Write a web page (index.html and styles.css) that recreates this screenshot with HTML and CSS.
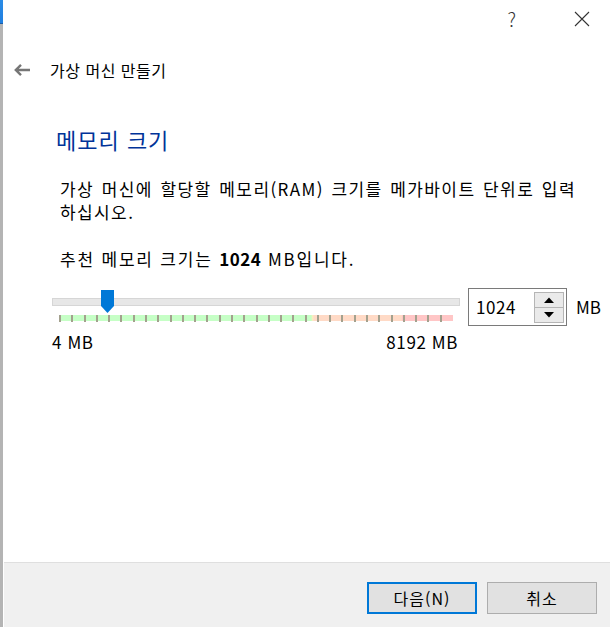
FILE: index.html
```html
<!DOCTYPE html>
<html lang="ko">
<head>
    <meta charset="UTF-8">
    <meta name="viewport" content="width=device-width, initial-scale=1.0">
    <title>가상 머신 만들기</title>
    <link rel="stylesheet" href="styles.css">
</head>
<body>
    <div class="edge"></div>
    <div class="window">
        <div class="titlebar">
            <span class="help">?</span>
            <svg class="close" width="16" height="16" viewBox="0 0 16 16">
                <path d="M1 1 L15 15 M15 1 L1 15" stroke="#333" stroke-width="1.1" fill="none"/>
            </svg>
        </div>
        <div class="header">
            <svg class="back" width="18" height="14" viewBox="0 0 18 14">
                <path d="M17 7 H3 M8 1.8 L2.8 7 L8 12.2" stroke="#767676" stroke-width="2.4" fill="none"/>
            </svg>
            <span class="wizard-title">가상 머신 만들기</span>
        </div>
        <div class="content">
            <h1 class="page-title">메모리 크기</h1>
            <p class="desc">가상 머신에 할당할 메모리(RAM) 크기를 메가바이트 단위로 입력 하십시오.</p>
            <p class="desc recommend">추천 메모리 크기는 <b>1024</b> MB입니다.</p>
            <div class="memory-row">
                <div class="slider">
                    <div class="track">
                        <svg class="thumb" width="13" height="24" viewBox="0 0 13 24">
                            <path d="M0 0 H13 V16 L6.5 23 L0 16 Z" fill="#0078d7"/>
                        </svg>
                    </div>
                    <div class="scale">
                        <div class="ticks">
                            <span></span><span></span><span></span><span></span>
                            <span></span><span></span><span></span><span></span>
                            <span></span><span></span><span></span><span></span>
                            <span></span><span></span><span></span><span></span>
                            <span></span><span></span><span></span><span></span>
                            <span></span><span></span><span></span><span></span>
                            <span></span><span></span><span></span><span></span>
                            <span></span><span></span><span></span><span></span>
                        </div>
                    </div>
                    <div class="limits">
                        <span>4 MB</span>
                        <span>8192 MB</span>
                    </div>
                </div>
                <div class="spinbox">
                    <span class="value">1024</span>
                    <div class="spin">
                        <div class="spin-btn">
                            <svg width="10" height="6" viewBox="0 0 10 6"><path d="M0 6 L5 0.5 L10 6 Z" fill="#000"/></svg>
                        </div>
                        <div class="spin-btn">
                            <svg width="10" height="6" viewBox="0 0 10 6"><path d="M0 0 L5 5.5 L10 0 Z" fill="#000"/></svg>
                        </div>
                    </div>
                </div>
                <span class="unit">MB</span>
            </div>
        </div>
        <div class="footer">
            <button type="button" class="btn default">다음(N)</button>
            <button type="button" class="btn">취소</button>
        </div>
    </div>
</body>
</html>
```

FILE: styles.css
```css
html, body { margin: 0; padding: 0; }
body {
    width: 610px; height: 627px; overflow: hidden;
    display: flex; background: #fff; color: #000;
    font-family: "Noto Sans CJK KR", sans-serif; font-size: 16px;
}
.edge {
    width: 3px; flex: none;
    background: linear-gradient(#2b8ce6 0, #1f7fe0 23px, #1a5ea8 23px, #1a5ea8 24px, #b4b4b4 24px);
}
.window { flex: 1; min-width: 0; display: flex; flex-direction: column; }

.titlebar { height: 38px; display: flex; align-items: center; justify-content: flex-end; }
.help { font-size: 19px; font-weight: 300; color: #333; margin-right: 58px; line-height: 20px; }
.close { margin-right: 20px; }

.header { display: flex; align-items: center; height: 30px; margin-top: 17px; }
.back { margin-left: 10px; margin-right: 19px; }
.wizard-title { font-size: 16px; line-height: 20px; letter-spacing: 0.5px; }

.content { padding: 0 0 0 53px; }
.page-title {
    margin: 40px 0 0 0; font-size: 22px; font-weight: normal; color: #003399;
    letter-spacing: 1px; line-height: 28px;
}
.desc {
    margin: 24px 14px 0 4px; font-size: 17px; line-height: 23px;
    letter-spacing: 1.4px; word-spacing: 1.5px; word-break: keep-all;
}
.recommend { margin-top: 24px; letter-spacing: 1.8px; word-spacing: 0; }
.recommend b { letter-spacing: 0.5px; }

.memory-row { display: flex; align-items: flex-start; margin-top: 18px; }
.slider { width: 408px; margin-left: -4px; padding-top: 10px; }
.track {
    position: relative; height: 6px;
    background: #e7e7e7; border: 1px solid #d6d6d6;
}
.thumb { position: absolute; left: 48px; top: -9px; }
.scale {
    margin: 9px 0 0 7px; width: 394px; height: 6px;
    background: linear-gradient(to right, #c6ffc6 0, #c6ffc6 64%, #f6f0c0 64.3%, #ffdac6 64.8%, #ffdac6 87%, #ffc6c6 87%);
}
.ticks { display: flex; justify-content: space-between; width: 383px; height: 7px; }
.ticks span { width: 2px; height: 7px; background: #a3a18e; }
.limits {
    display: flex; justify-content: space-between; margin-top: 11px;
    font-size: 17px; letter-spacing: 0.6px; line-height: 20px; padding-right: 2px;
}

.spinbox {
    width: 97px; height: 36px; margin-left: 8px;
    border: 1px solid #7a7a7a; display: flex; align-items: center;
}
.value { flex: 1; padding-left: 7px; font-size: 17px; letter-spacing: 0.6px; line-height: 20px; }
.spin { display: flex; flex-direction: column; margin-right: 2px; border: 1px solid #b5b5b5; }
.spin-btn {
    width: 28px; height: 14px; background: #eaeaea;
    display: flex; align-items: center; justify-content: center;
}
.spin-btn + .spin-btn { border-top: 1px solid #b5b5b5; }
.unit { margin-left: 9px; margin-top: 9px; font-size: 17px; line-height: 20px; }

.footer {
    margin-top: auto; height: 65px; background: #f0f0f0;
    border-top: 1px solid #dfdfdf; margin-left: 1px;
    display: flex; justify-content: flex-end; align-items: flex-start;
    padding: 19px 13px 0 0; box-sizing: border-box;
}
.btn {
    width: 110px; height: 32px; margin-left: 10px;
    background: #e1e1e1; border: 1px solid #adadad; color: #000;
    font-family: inherit; font-size: 16px; letter-spacing: 1px; padding: 0;
}
.btn.default { border: 2px solid #0078d7; }
```
